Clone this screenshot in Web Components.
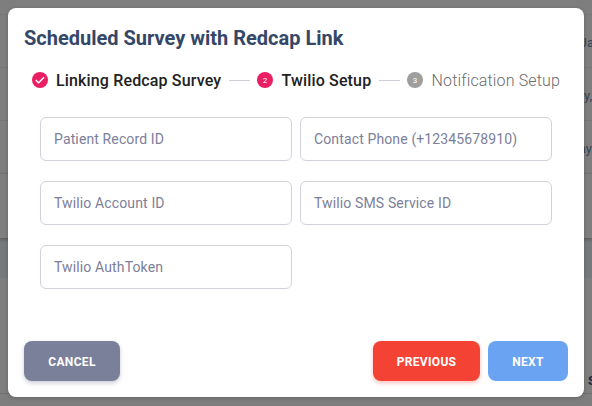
<!DOCTYPE html>
<html lang="en"><head><meta charset="utf-8"><title>Scheduled Survey</title>
<style>html,body{margin:0;height:100%;overflow:hidden}body{font-family:Roboto,sans-serif;background:#7f7f7f}</style></head>
<body>
<survey-page></survey-page>
<script>
const define=(name,html,init)=>customElements.define(name,class extends HTMLElement{
  constructor(){super();const t=document.createElement('template');t.innerHTML=html;
    this.attachShadow({mode:'open'}).append(t.content.cloneNode(true));if(init)init(this,this.shadowRoot);}
});
define('page-backdrop',`<style>
:host{display:flex;flex-direction:column;height:406px;background:#7e7e7e;color:#394355;font-size:13px;overflow:hidden}
div{box-sizing:border-box;flex:none;display:flex;justify-content:flex-end;align-items:center;white-space:nowrap;overflow:hidden}
.head{height:15px;border-bottom:1px solid #777}
.row{height:53px;border-bottom:1px solid #777}
.row span{padding-top:2px}
.r1 span{margin-right:-2px}
.rest{height:64px;box-shadow:0 1px 3px #555;position:relative}
.band{height:40px;background:linear-gradient(#6f7275,#76797c 5px)}
.last{height:116px;border-bottom:1px solid #707070;align-items:flex-end;padding-bottom:5px;font-weight:700;color:#202838}
.last span{margin-right:-4px}
</style><div class="head"></div><div class="row r1"><span>Ja</span></div><div class="row"><span>y,</span></div><div class="row"><span>ay</span></div><div class="rest"></div><div class="band"></div><div class="last"><span>S</span></div>`);
define('step-item',`<style>
:host{display:flex;align-items:center;gap:8px;flex:none;font-size:16px;line-height:24px;font-weight:500;letter-spacing:.15px;color:#212121;white-space:nowrap}
:host([number]){gap:8.5px}
:host([state=pending]){font-weight:300;color:#6b6b6b}
span{padding-top:2px}
svg{display:block;width:16px;height:16px;color:#e91e63}
:host([state=pending]) svg{color:#9e9e9e}
text{font:400 8px Roboto,sans-serif;letter-spacing:0;fill:#fff;text-anchor:middle}
</style><svg viewBox="0 0 16 16"></svg><span><slot></slot></span>`,(h,r)=>{
  r.querySelector('svg').innerHTML='<circle cx="8" cy="8" r="8" fill="currentColor"/>'+(h.getAttribute('state')==='done'
  ?'<path d="M3.8 8.1 6.6 10.8 12.1 5.3" fill="none" stroke="#fff" stroke-width="1.5"/>'
  :'<text x="8" y="10.8">'+h.getAttribute('number')+'</text>');
});
define('step-bar',`<style>:host{display:flex;align-items:center;padding:0 8px;height:24px}</style><slot></slot>`);
define('step-line',`<style>:host{display:block;flex:1;height:1px;background:#ced0da;margin:1px 7.5px 0 8px}</style>`);
define('outlined-field',`<style>
:host{box-sizing:border-box;display:flex;align-items:center;height:44px;border:1px solid #d1d2da;border-radius:6px;padding:0 13px;font-size:14px;line-height:20px;color:#7b809a;letter-spacing:.13px}
</style><span><slot></slot></span>`);
define('action-button',`<style>
:host{display:block}
button{font:700 12px/16px Roboto,sans-serif;letter-spacing:.32px;color:#fff;border:0;border-radius:8px;height:40px;width:100%;padding:2px 0 0;display:grid;place-items:center}
:host([kind=cancel]){width:96px}:host([kind=cancel]) button{background:#7b809a;box-shadow:0 2px 4px #7b809a66}
:host([kind=previous]){width:107px;margin-left:auto}:host([kind=previous]) button{background:#f44335;box-shadow:0 2px 4px #f4433555}
:host([kind=next]){width:80px}:host([kind=next]) button{background:#6aa3f1}
</style><button type="button"><span><slot></slot></span></button>`);
define('modal-dialog',`<style>
:host{box-sizing:border-box;display:flex;flex-direction:column;width:576px;height:389px;background:#fff;border-radius:8px;padding:13px 16px 16px;box-shadow:0 1px 4px #0003}
h2{margin:0 0 13px;font-size:20px;line-height:34px;font-weight:700;color:#344767;white-space:nowrap}
.grid{display:grid;grid-template-columns:252px 252px;gap:20px 8px;margin:25px 16px 0}
footer{display:flex;gap:8px;margin-top:auto}
</style><h2><slot name="title"></slot></h2><slot name="steps"></slot><div class="grid"><slot></slot></div><footer><slot name="actions"></slot></footer>`);
define('survey-page',`<style>:host{display:block;position:relative;height:406px}modal-dialog{position:absolute;left:8px;top:8px}</style>
<page-backdrop></page-backdrop>
<modal-dialog><span slot="title">Scheduled Survey with Redcap Link</span>
<step-bar slot="steps"><step-item state="done">Linking Redcap Survey</step-item><step-line></step-line><step-item number="2">Twilio Setup</step-item><step-line></step-line><step-item number="3" state="pending">Notification Setup</step-item></step-bar>
<outlined-field>Patient Record ID</outlined-field><outlined-field>Contact Phone (+12345678910)</outlined-field><outlined-field>Twilio Account ID</outlined-field><outlined-field>Twilio SMS Service ID</outlined-field><outlined-field>Twilio AuthToken</outlined-field>
<action-button slot="actions" kind="cancel">CANCEL</action-button><action-button slot="actions" kind="previous">PREVIOUS</action-button><action-button slot="actions" kind="next">NEXT</action-button></modal-dialog>`);
</script></body></html>
